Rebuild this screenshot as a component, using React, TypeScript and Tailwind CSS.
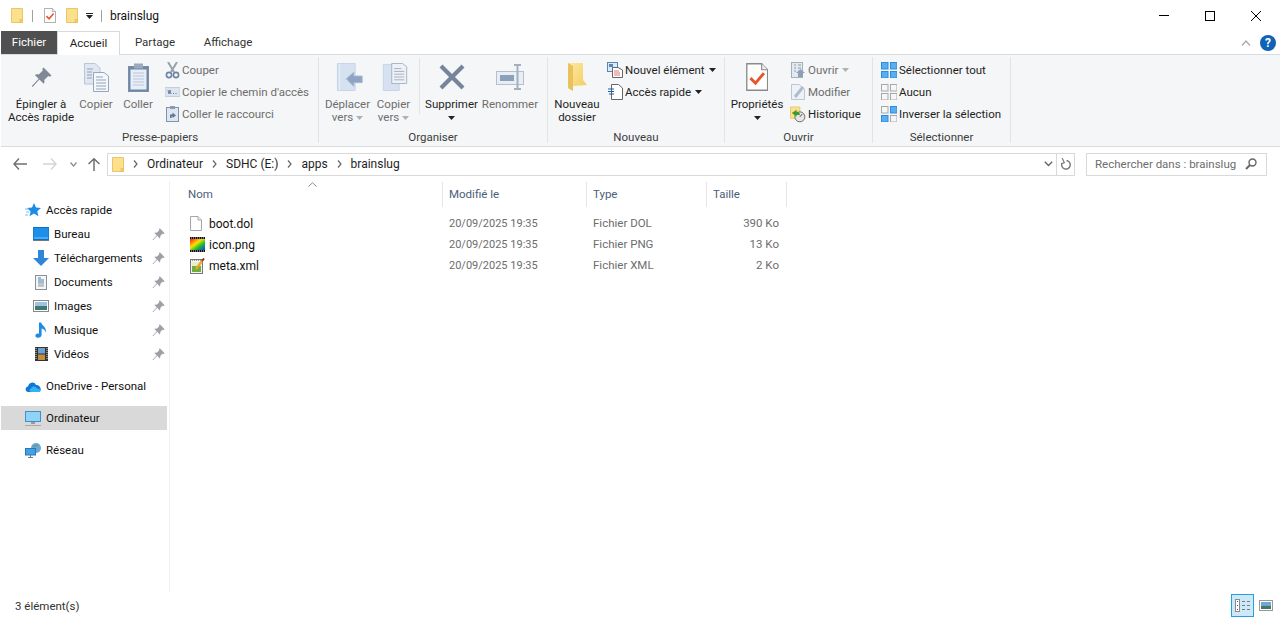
import { type ReactNode } from "react";

const Folder = ({ w = 12, h = 15 }: { w?: number; h?: number }) => (
  <svg width={w} height={h} viewBox="0 0 12 15">
    <path d="M0.5 0.5H11.5V14.5H0.5Z" fill="#fde08c" stroke="#e8c76c" />
    <path d="M9 11.5H11.5V14.5H9Z" fill="#f5cd63" stroke="#e2bb55" strokeWidth="0.6" />
  </svg>
);

const PropsIcon = ({ size = 15 }: { size?: number }) => (
  <svg width={size * 0.8} height={size} viewBox="0 0 20 25">
    <path d="M0.7 0.7H14L19.3 6V24.3H0.7Z" fill="#fff" stroke="#8a8a8a" strokeWidth="1.2" />
    <path d="M14 0.7V6H19.3" fill="#eee" stroke="#8a8a8a" strokeWidth="1" />
    <path d="M4 13.5L8.5 18L16 9" fill="none" stroke="#e8562a" strokeWidth="2.6" />
  </svg>
);

const Caret = ({ color = "#222" }: { color?: string }) => (
  <svg width="7" height="4" viewBox="0 0 7 4" className="inline-block">
    <path d="M0 0H7L3.5 4Z" fill={color} />
  </svg>
);

const Pin = ({ size = 12, color = "#8f979e" }: { size?: number; color?: string }) => (
  <svg width={size} height={size} viewBox="0 0 20 20">
    <path
      d="M12 0.5L19.5 8L18 9.2L16.5 8.6L12.6 12.4C13.2 14 12.8 15 12 16L8 12L1.5 19L0.8 18.2L7.3 11.2L3.6 7.6C4.8 6.8 6 6.6 7.4 7.2L11.2 3.3L10.7 1.8Z"
      fill={color}
    />
  </svg>
);

const CopyIcon = () => (
  <svg width="25" height="29" viewBox="0 0 25 29">
    <path d="M0.5 0.5H11L16 5V21H0.5Z" fill="#dfe7f2" stroke="#b9c6d8" />
    <path d="M9.5 9.5H20L24.5 13V28.5H9.5Z" fill="#f4f7fb" stroke="#97a6ba" />
    <path d="M12 14H19M12 17H22M12 20H22M12 23H22M12 26H22M3 6H9M3 9H8M3 12H8M3 15H8" stroke="#93a3b8" />
  </svg>
);

const PasteIcon = () => (
  <svg width="21" height="29" viewBox="0 0 21 29">
    <rect x="0.5" y="3.5" width="20" height="25" fill="#6f86a6" stroke="#7890ae" />
    <rect x="2.5" y="6.5" width="16" height="20" fill="#e9eef6" />
    <path d="M5 10H16M5 13H16M5 16H16M5 19H16M5 22H16" stroke="#b8c6dc" />
    <rect x="6" y="0.5" width="9" height="5" fill="#9aa9bd" />
  </svg>
);

const CutIcon = () => (
  <svg width="15" height="17" viewBox="0 0 15 17">
    <path d="M3 0L9 10M12 0L6 10" stroke="#97a2af" strokeWidth="2" />
    <circle cx="4" cy="13" r="2.6" fill="none" stroke="#6e84a3" strokeWidth="1.6" />
    <circle cx="11" cy="13" r="2.6" fill="none" stroke="#6e84a3" strokeWidth="1.6" />
  </svg>
);

const PathIcon = () => (
  <svg width="15" height="10" viewBox="0 0 15 10">
    <rect width="15" height="9" y="0.5" fill="#dce4ef" stroke="#c5cfdc" />
    <path d="M3 3L4 7L5 3L6 7M8 6.5H9M10.5 6.5H11.5" stroke="#6b7f99" fill="none" />
  </svg>
);

const ShortcutIcon = () => (
  <svg width="13" height="16" viewBox="0 0 13 16">
    <rect x="0.5" y="1.5" width="12" height="14" fill="#dfe6f0" stroke="#7e93ad" />
    <rect x="4" y="0" width="5" height="3" fill="#8b9bb0" />
    <path d="M4 12V8.5H6.5V6.5L10 9.5L6.5 12V10.5H5.5V12Z" fill="#5f7590" />
  </svg>
);

const MoveIcon = () => (
  <svg width="28" height="28" viewBox="0 0 28 30">
    <path d="M0.5 0.5H19.5V29.5H0.5Z" fill="#d6e2f1" stroke="#c5d3e5" />
    <path d="M3 1V29" stroke="#e8eff8" />
    <path d="M10 17L18 10V14H27V21H18V25Z" fill="#8ea4c2" stroke="#a4b6cf" />
  </svg>
);

const CopyToIcon = () => (
  <svg width="26" height="28" viewBox="0 0 26 30">
    <path d="M0.5 1.5H17.5V29.5H0.5Z" fill="#d6e2f1" stroke="#c5d3e5" />
    <path d="M9.5 0.5H21L25.5 4V22H9.5Z" fill="#eef2f8" stroke="#a3b0c2" />
    <path d="M12 6H20M12 9H23M12 12H23M12 15H23M12 18H23" stroke="#a0adbf" />
  </svg>
);

const DeleteIcon = () => (
  <svg width="26" height="26" viewBox="0 0 26 26">
    <path d="M2 2L24 24M24 2L2 24" stroke="#76859c" strokeWidth="4.2" />
  </svg>
);

const RenameIcon = () => (
  <svg width="28" height="26" viewBox="0 0 28 26">
    <rect x="0.5" y="7.5" width="27" height="13" fill="#e9eef5" stroke="#b4c0cf" />
    <rect x="4" y="11" width="14" height="6" fill="#8ba0bb" />
    <path d="M18 1H25M21.5 1V25M18 25H25" stroke="#a3b0c0" strokeWidth="2" />
  </svg>
);

const NewFolderIcon = () => (
  <svg width="19" height="28" viewBox="0 0 19 28">
    <defs>
      <linearGradient id="nf" x1="0" y1="0" x2="1" y2="1">
        <stop offset="0" stopColor="#fdeaa4" />
        <stop offset="1" stopColor="#f3c95d" />
      </linearGradient>
    </defs>
    <path d="M0 0H15V17L19 22L5 23V28L0 25Z" fill="url(#nf)" />
    <path d="M0 0L5 3V28L0 25Z" fill="#e9c25c" />
  </svg>
);

const NewItemIcon = () => (
  <svg width="16" height="16" viewBox="0 0 16 16">
    <rect x="0.5" y="0.5" width="10" height="9" fill="#dbe9f8" stroke="#5a86b5" />
    <rect x="2" y="2" width="4" height="3" fill="#5a86b5" />
    <path d="M5.5 5.5H11L15.5 8V15.5H5.5Z" fill="#fff" stroke="#666" />
    <path d="M7 9H12M7 11H13M7 13H13" stroke="#d77" />
  </svg>
);

const QuickIcon = () => (
  <svg width="15" height="16" viewBox="0 0 15 16">
    <path d="M3.5 0.5H10.5L14.5 4V15.5H3.5Z" fill="#fff" stroke="#666" />
    <path d="M0 5H6M0 7.5H6M1 10H6" stroke="#1f5fa8" />
  </svg>
);

const OpenIcon = () => (
  <svg width="15" height="16" viewBox="0 0 15 16">
    <rect x="0.5" y="0.5" width="11" height="15" fill="#e3e9f1" stroke="#a4afbe" />
    <path d="M3 3H5M7 3H10M3 6H5M7 6H10M3 9H5" stroke="#8e9cae" />
    <path d="M7 15V11H5L9.5 7L14 11H12V15Z" fill="#8ea0b6" />
  </svg>
);

const EditIcon = () => (
  <svg width="14" height="16" viewBox="0 0 14 16">
    <path d="M0.5 0.5H8L13.5 5V15.5H0.5Z" fill="#eef2f7" stroke="#bcc7d5" />
    <path d="M4 13L12 3" stroke="#aebccd" strokeWidth="3" />
  </svg>
);

const HistoryIcon = () => (
  <svg width="17" height="17" viewBox="0 0 17 17">
    <path d="M0.5 0.5H10.5V12.5H0.5Z" fill="#fde08c" stroke="#e8c76c" />
    <circle cx="10.5" cy="11" r="5.3" fill="#e6e6e6" stroke="#666" />
    <path d="M10.5 11L13 8" stroke="#444" />
    <path d="M2 7L7 3.5V5.5C9.5 5.5 10.5 6.5 10.5 9H7V11Z" fill="#3c9a2e" />
  </svg>
);

const SelectIcon = ({ on }: { on: number[] }) => (
  <svg width="16" height="16" viewBox="0 0 16 16">
    {[
      [0, 0],
      [9, 0],
      [0, 9],
      [9, 9],
    ].map(([x, y], i) => (
      <rect
        key={i}
        x={x + 0.5}
        y={y + 0.5}
        width="6.5"
        height="6.5"
        fill={on.includes(i) ? "#5aaef0" : "#f5f6f7"}
        stroke={on.includes(i) ? "#2a8de0" : "#a8a8a8"}
      />
    ))}
  </svg>
);

const QuickStar = () => (
  <svg width="16" height="14" viewBox="0 0 16 14">
    <path d="M9 0L11 4.6L16 5L12.2 8.2L13.5 13.2L9 10.6L4.5 13.2L5.6 8.4L2 5L7 4.6Z" fill="#1e8be6" />
    <path d="M0 6H4M1 9H4M0 12H3" stroke="#7cc0f2" />
  </svg>
);

const Desktop = () => (
  <svg width="16" height="14" viewBox="0 0 16 14">
    <rect x="0" y="0.5" width="16" height="12" fill="#1d8fe8" stroke="#0f6fc0" />
    <path d="M1 11H15" stroke="#7cc4f6" />
    <path d="M0 13.5H16" stroke="#777" />
  </svg>
);

const Downloads = () => (
  <svg width="16" height="17" viewBox="0 0 16 17">
    <path d="M5 0H11V8H16L8 16L0 8H5Z" fill="#2f86d8" />
  </svg>
);

const Docs = () => (
  <svg width="12" height="15" viewBox="0 0 12 15">
    <rect x="0.5" y="0.5" width="11" height="14" fill="#f4f6f8" stroke="#8b8f94" />
    <path d="M3 3H6M3 5H9M3 7H9" stroke="#4a7eb0" />
    <path d="M3 9H9M3 11H9" stroke="#8d959e" />
  </svg>
);

const Pictures = () => (
  <svg width="16" height="12" viewBox="0 0 16 12">
    <rect x="0.5" y="0.5" width="15" height="11" fill="#fff" stroke="#888" />
    <rect x="2" y="2" width="12" height="4" fill="#9ec4e4" />
    <rect x="2" y="6" width="12" height="4" fill="#3f7a6c" />
  </svg>
);

const Music = () => (
  <svg width="12" height="16" viewBox="0 0 12 16">
    <path d="M4 0.5H6.2C6.6 3.5 11.6 5 11 10.5C10.2 8 8.5 7 6.6 6.5V13C6.6 15 4 16.4 1.8 15.6C-0.2 14.8 0 12.4 2 11.8C2.8 11.5 3.5 11.6 4 11.8Z" fill="#1e8be6" />
  </svg>
);

const Videos = () => (
  <svg width="13" height="14" viewBox="0 0 13 14">
    <rect width="13" height="14" fill="#333" />
    <rect x="3" y="1" width="7" height="5.5" fill="#6da2cf" />
    <rect x="3" y="7.5" width="7" height="5.5" fill="#c08f3e" />
    <path d="M1 1V13M12 1V13" stroke="#ddd" strokeDasharray="1 1" />
  </svg>
);

const Cloud = () => (
  <svg width="16" height="11" viewBox="0 0 16 11">
    <path d="M3.5 11C0 11 -0.5 6 3 5.5C4 1 9.5 0 11 4C14 3.5 16.5 7 15.5 9.5C15 10.5 14.5 11 13.5 11Z" fill="#0f78d4" />
    <path d="M6.5 11C4 11 4 8 6 7.5C7.5 4.5 11 5 12 7.5C14.5 7.5 16 9.5 15.5 10C15 11 14.5 11 13.5 11Z" fill="#35b1f5" />
  </svg>
);

const Computer = () => (
  <svg width="16" height="15" viewBox="0 0 16 15">
    <rect x="0.5" y="0.5" width="15" height="10" fill="#8fd3f7" stroke="#3f8fc8" />
    <path d="M6 12H10" stroke="#999" strokeWidth="2" />
    <path d="M0 14.5H16" stroke="#a9a9a9" />
  </svg>
);

const Network = () => (
  <svg width="16" height="15" viewBox="0 0 16 15">
    <circle cx="11" cy="5" r="5" fill="#6ba6d8" />
    <path d="M8 3C10 4 11 2 13 2" stroke="#5f9950" fill="none" />
    <rect x="0.5" y="5.5" width="10" height="6.5" fill="#3ea2e6" stroke="#2a78b8" />
    <path d="M3 14.5H8M5.5 12V14" stroke="#6c7a86" />
  </svg>
);

const BlankFile = () => (
  <svg width="12" height="15" viewBox="0 0 12 15">
    <path d="M0.5 0.5H8L11.5 4V14.5H0.5Z" fill="#fff" stroke="#a6a6a6" />
    <path d="M8 0.5V4H11.5" fill="#f0f0f0" stroke="#a6a6a6" />
  </svg>
);

const ImageFile = () => (
  <svg width="15" height="15" viewBox="0 0 15 15">
    <defs>
      <linearGradient id="rb" x1="0" y1="0" x2="1" y2="1">
        <stop offset="0" stopColor="#ff1a10" />
        <stop offset="0.4" stopColor="#ffe000" />
        <stop offset="0.65" stopColor="#20c030" />
        <stop offset="1" stopColor="#1040e0" />
      </linearGradient>
    </defs>
    <rect width="15" height="15" fill="#111" />
    <rect y="2" width="15" height="11" fill="url(#rb)" />
    <path d="M1 1H14M1 14H14" stroke="#ccc" strokeDasharray="1 1" />
  </svg>
);

const XmlFile = () => (
  <svg width="15" height="16" viewBox="0 0 15 16">
    <rect x="0.5" y="1.5" width="12" height="14" fill="#f3f3f3" stroke="#777" />
    <path d="M2 2.5H11" stroke="#999" strokeDasharray="1 1" />
    <rect x="2" y="8" width="9" height="6" fill="#6fae3f" />
    <rect x="2" y="4" width="9" height="4" fill="#e7eec8" />
    <path d="M6 11L12 3" stroke="#e9a826" strokeWidth="2.4" />
    <path d="M12 3L14 0.5" stroke="#8e2d22" strokeWidth="2" />
  </svg>
);

const BigBtn = ({
  w,
  icon,
  children,
  off,
}: {
  w: string;
  icon: ReactNode;
  children: ReactNode;
  off?: boolean;
}) => (
  <div className={`${w} flex flex-col items-center shrink-0 ${off ? "text-[#6d6d6d]" : "text-[#1e1e1e]"}`}>
    <div className="h-[43px] flex items-center justify-center pt-[1px]">{icon}</div>
    <div className="text-center leading-[13px] whitespace-nowrap">{children}</div>
  </div>
);

const SmallBtn = ({ icon, label, off, caret }: { icon: ReactNode; label: string; off?: boolean; caret?: string }) => (
  <div className={`h-[22px] flex items-center whitespace-nowrap ${off ? "text-[#6d6d6d]" : "text-[#1e1e1e]"}`}>
    <span className="w-[16px] mr-[2px] flex items-center justify-center">{icon}</span>
    <span className="pt-px">{label}</span>
    {caret && (
      <span className="ml-[4px] flex">
        <Caret color={caret} />
      </span>
    )}
  </div>
);

const Group = ({ w, label, children }: { w: string; label: string; children: ReactNode }) => (
  <div className={`${w} relative flex flex-col shrink-0`}>
    <div className="flex h-[73px]">{children}</div>
    <div className="h-[18px] text-center leading-[18px] text-[#3c3c3c] pr-[1px]">{label}</div>
    <div className="absolute right-0 top-[2px] bottom-[3px] w-px bg-[#e2e3e4]" />
  </div>
);

const NavItem = ({
  icon,
  label,
  pinned,
  root,
  active,
}: {
  icon: ReactNode;
  label: string;
  pinned?: boolean;
  root?: boolean;
  active?: boolean;
}) => (
  <div className={`h-[24px] ml-[1px] w-[166px] flex items-center text-[#111] ${active ? "bg-[#d9d9d9]" : ""} ${root ? "pl-[24px]" : "pl-[32px]"}`}>
    <span className="w-[16px] mr-[5px] flex items-center justify-center">{icon}</span>
    <span className="flex-1 whitespace-nowrap pt-px">{label}</span>
    {pinned && (
      <span className="mr-[2px] flex">
        <Pin size={13} color="#9aa0a6" />
      </span>
    )}
  </div>
);

const files = [
  { icon: <BlankFile />, name: "boot.dol", type: "Fichier DOL", size: "390 Ko" },
  { icon: <ImageFile />, name: "icon.png", type: "Fichier PNG", size: "13 Ko" },
  { icon: <XmlFile />, name: "meta.xml", type: "Fichier XML", size: "2 Ko" },
];

const Crumb = () => (
  <svg width="5" height="8" viewBox="0 0 5 8" className="mx-[9px] shrink-0">
    <path d="M1 0.5L4 4L1 7.5" fill="none" stroke="#666" strokeWidth="1.2" />
  </svg>
);

export default function App() {
  return (
    <div className="w-[1280px] h-[618px] overflow-hidden bg-white flex flex-col text-[11.5px] font-['Roboto','Liberation_Sans',sans-serif] text-[#1e1e1e]">
      {/* title bar */}
      <div className="h-[31px] flex items-center pl-[11px] shrink-0">
        <Folder />
        <span className="w-px h-[12px] bg-[#a0a0a0] ml-[9px] mr-[11px]" />
        <PropsIcon size={15} />
        <span className="ml-[10px]">
          <Folder />
        </span>
        <span className="ml-[8px] flex flex-col items-center gap-[1px]">
          <span className="w-[7px] h-px bg-[#222]" />
          <Caret />
        </span>
        <span className="w-px h-[12px] bg-[#a0a0a0] ml-[8px] mr-[8px]" />
        <span className="text-[#111] text-[12px]">brainslug</span>
        <div className="ml-auto flex h-full pr-[1px]">
          <div className="w-[46px] flex items-center justify-center">
            <span className="w-[10px] h-px bg-black" />
          </div>
          <div className="w-[46px] flex items-center justify-center">
            <span className="w-[10px] h-[10px] border border-black" />
          </div>
          <div className="w-[46px] flex items-center justify-center">
            <svg width="10" height="10" viewBox="0 0 10 10">
              <path d="M0 0L10 10M10 0L0 10" stroke="#000" strokeWidth="1" />
            </svg>
          </div>
        </div>
      </div>

      {/* tabs */}
      <div className="h-[23px] flex items-stretch pl-[1px] shrink-0 relative">
        <div className="w-[56px] bg-[#505050] text-white flex items-center justify-center pt-px">Fichier</div>
        <div className="w-[63px] h-[24px] bg-white border border-b-0 border-[#d9d9d9] flex items-center justify-center relative z-10">Accueil</div>
        <div className="w-[70px] flex items-center justify-center text-[#333] pt-px">Partage</div>
        <div className="w-[76px] flex items-center justify-center text-[#333] pt-px">Affichage</div>
        <div className="ml-auto flex items-center pr-[4px]">
          <svg width="10" height="6" viewBox="0 0 10 6" className="mr-[9px]">
            <path d="M1 5.5L5 1L9 5.5" fill="none" stroke="#a8a8a8" strokeWidth="1.2" />
          </svg>
          <span className="w-[16px] h-[16px] rounded-full bg-[#0f62b5] text-white text-[12px] font-bold flex items-center justify-center">?</span>
        </div>
      </div>

      {/* ribbon */}
      <div className="h-[93px] ml-[1px] bg-[#f5f6f7] border-y border-[#dadbdc] flex pl-[1px] shrink-0">
        <Group w="w-[317px]" label="Presse-papiers">
          <BigBtn w="w-[78px]" icon={<Pin size={21} color="#7f8a94" />}>
            Épingler à
            <br />
            Accès rapide
          </BigBtn>
          <BigBtn w="w-[32px]" off icon={<CopyIcon />}>
            Copier
          </BigBtn>
          <BigBtn w="w-[52px]" off icon={<PasteIcon />}>
            Coller
          </BigBtn>
          <div className="pt-[4px]">
            <SmallBtn off icon={<CutIcon />} label="Couper" />
            <SmallBtn off icon={<PathIcon />} label="Copier le chemin d'accès" />
            <SmallBtn off icon={<ShortcutIcon />} label="Coller le raccourci" />
          </div>
        </Group>
        <Group w="w-[229px]" label="Organiser">
          <div className="w-[4px]" />
          <BigBtn w="w-[49px]" off icon={<span className="flex ml-[5px]"><MoveIcon /></span>}>
            Déplacer
            <br />
            vers <Caret color="#b0b0b0" />
          </BigBtn>
          <BigBtn w="w-[43px]" off icon={<span className="flex ml-[2px]"><CopyToIcon /></span>}>
            Copier
            <br />
            vers <Caret color="#b0b0b0" />
          </BigBtn>
          <div className="w-px h-[56px] bg-[#e2e3e4] ml-[4px] mr-[3px] mt-[3px]" />
          <BigBtn w="w-[57px]" icon={<DeleteIcon />}>
            Supprimer
            <br />
            <Caret />
          </BigBtn>
          <BigBtn w="w-[60px]" off icon={<RenameIcon />}>
            Renommer
          </BigBtn>
        </Group>
        <Group w="w-[177px]" label="Nouveau">
          <div className="w-[4px]" />
          <BigBtn w="w-[50px]" icon={<NewFolderIcon />}>
            Nouveau
            <br />
            dossier
          </BigBtn>
          <div className="pt-[4px] ml-[5px]">
            <SmallBtn icon={<NewItemIcon />} label="Nouvel élément" caret="#222" />
            <SmallBtn icon={<QuickIcon />} label="Accès rapide" caret="#222" />
          </div>
        </Group>
        <Group w="w-[148px]" label="Ouvrir">
          <div className="w-[4px]" />
          <BigBtn w="w-[56px]" icon={<PropsIcon size={28} />}>
            Propriétés
            <br />
            <Caret />
          </BigBtn>
          <div className="pt-[4px] ml-[5px]">
            <SmallBtn off icon={<OpenIcon />} label="Ouvrir" caret="#b0b0b0" />
            <SmallBtn off icon={<EditIcon />} label="Modifier" />
            <SmallBtn icon={<HistoryIcon />} label="Historique" />
          </div>
        </Group>
        <Group w="w-[138px]" label="Sélectionner">
          <div className="pt-[4px] ml-[8px]">
            <SmallBtn icon={<SelectIcon on={[0, 1, 2, 3]} />} label="Sélectionner tout" />
            <SmallBtn icon={<SelectIcon on={[]} />} label="Aucun" />
            <SmallBtn icon={<SelectIcon on={[1, 2]} />} label="Inverser la sélection" />
          </div>
        </Group>
      </div>

      {/* address row */}
      <div className="h-[34px] flex items-center pl-[13px] shrink-0">
        <svg width="14" height="12" viewBox="0 0 14 12">
          <path d="M6 0.5L1 6L6 11.5M1 6H14" fill="none" stroke="#6f6f6f" strokeWidth="1.4" />
        </svg>
        <svg width="14" height="12" viewBox="0 0 14 12" className="ml-[16px]">
          <path d="M8 0.5L13 6L8 11.5M13 6H0" fill="none" stroke="#d4d4d4" strokeWidth="1.4" />
        </svg>
        <svg width="7" height="5" viewBox="0 0 7 5" className="ml-[13px]">
          <path d="M0.5 0.5L3.5 4L6.5 0.5" fill="none" stroke="#8a8a8a" strokeWidth="1.2" />
        </svg>
        <svg width="12" height="13" viewBox="0 0 12 13" className="ml-[11px]">
          <path d="M0.5 6L6 0.8L11.5 6M6 1V13" fill="none" stroke="#6f6f6f" strokeWidth="1.5" />
        </svg>
        <div className="w-[968px] h-[23px] ml-[7px] border border-[#d9d9d9] flex items-center pl-[4px] text-[12px]">
          <Folder />
          <Crumb />
          <span>Ordinateur</span>
          <Crumb />
          <span>SDHC (E:)</span>
          <Crumb />
          <span>apps</span>
          <Crumb />
          <span>brainslug</span>
          <svg width="9" height="6" viewBox="0 0 9 6" className="ml-auto mr-[3px]">
            <path d="M0.8 0.8L4.5 4.5L8.2 0.8" fill="none" stroke="#666" strokeWidth="1.4" />
          </svg>
          <span className="w-px h-full bg-[#d9d9d9]" />
          <span className="w-[17px] flex justify-center">
            <svg width="11" height="12" viewBox="0 0 11 12">
              <path d="M6.5 2.5A4.3 4.3 0 1 1 2 5" fill="none" stroke="#7a7a7a" strokeWidth="1.4" />
              <path d="M3.5 0V5H0" transform="rotate(-25 3 3)" fill="none" stroke="#7a7a7a" strokeWidth="1.2" />
            </svg>
          </span>
        </div>
        <div className="w-[181px] h-[23px] ml-[11px] border border-[#d9d9d9] flex items-center pl-[8px] text-[#6d6d6d]">
          <span className="whitespace-nowrap pt-px">Rechercher dans : brainslug</span>
          <svg width="12" height="12" viewBox="0 0 12 12" className="ml-auto mr-[9px]">
            <circle cx="7.5" cy="4.5" r="3.5" fill="none" stroke="#666" strokeWidth="1.4" />
            <path d="M5 7L1 11" stroke="#666" strokeWidth="2" />
          </svg>
        </div>
      </div>

      {/* main */}
      <div className="flex-1 flex min-h-0">
        <div className="w-[170px] border-r border-[#f0f0f0] pt-[17px] shrink-0">
          <NavItem root icon={<QuickStar />} label="Accès rapide" />
          <NavItem pinned icon={<Desktop />} label="Bureau" />
          <NavItem pinned icon={<Downloads />} label="Téléchargements" />
          <NavItem pinned icon={<Docs />} label="Documents" />
          <NavItem pinned icon={<Pictures />} label="Images" />
          <NavItem pinned icon={<Music />} label="Musique" />
          <NavItem pinned icon={<Videos />} label="Vidéos" />
          <div className="h-[8px]" />
          <NavItem root icon={<Cloud />} label="OneDrive - Personal" />
          <div className="h-[8px]" />
          <NavItem root active icon={<Computer />} label="Ordinateur" />
          <div className="h-[8px]" />
          <NavItem root icon={<Network />} label="Réseau" />
        </div>

        <div className="flex-1 pl-[11px] pt-px relative">
          <svg width="9" height="5" viewBox="0 0 9 5" className="absolute left-[138px] top-[1px]">
            <path d="M0.5 4.5L4.5 0.8L8.5 4.5" fill="none" stroke="#8a8a8a" />
          </svg>
          <div className="grid grid-cols-[262px_144px_120px_80px] h-[25px] text-[#4c607a] mb-[6px]">
            <div className="pl-[7px] pt-px flex items-center border-r border-[#e5e5e5]">Nom</div>
            <div className="pl-[6px] pt-px flex items-center border-r border-[#e5e5e5]">Modifié le</div>
            <div className="pl-[6px] pt-px flex items-center border-r border-[#e5e5e5]">Type</div>
            <div className="pl-[6px] pt-px flex items-center border-r border-[#e5e5e5]">Taille</div>
          </div>
          {files.map((f) => (
            <div key={f.name} className="grid grid-cols-[262px_144px_120px_80px] h-[21px] items-center text-[#6d6d6d]">
              <div className="pl-[9px] flex items-center text-[#111] text-[12px]">
                <span className="w-[15px] mr-[4px] flex">{f.icon}</span>
                {f.name}
              </div>
              <div className="pl-[6px] pt-px text-[11px]">20/09/2025 19:35</div>
              <div className="pl-[6px] pt-px">{f.type}</div>
              <div className="pr-[8px] pt-px text-right">{f.size}</div>
            </div>
          ))}
        </div>
      </div>

      {/* status bar */}
      <div className="h-[26px] flex items-end pb-[1px] pl-[15px] pr-[3px] shrink-0 text-[#333]">
        <span className="mb-[2px]">3 élément(s)</span>
        <div className="ml-auto flex items-center gap-[1px]">
          <div className="w-[23px] h-[23px] bg-[#cce8f9] border-[1px] border-[#26a0da] flex items-center justify-center">
            <svg width="16" height="13" viewBox="0 0 16 13">
              <rect x="0.5" y="0.5" width="4" height="12" fill="#fff" stroke="#8a8a8a" />
              <path d="M7 2.5H10M12 2.5H15M7 6.5H10M12 6.5H15M7 10.5H10M12 10.5H15" stroke="#7a7a7a" />
              <path d="M2 2.5H3M2 6.5H3" stroke="#555" />
              <path d="M2 10.5H3" stroke="#b03030" />
            </svg>
          </div>
          <div className="w-[22px] h-[23px] flex items-center justify-center">
            <svg width="14" height="11" viewBox="0 0 14 11">
              <rect x="0.5" y="0.5" width="13" height="10" fill="#fff" stroke="#999" />
              <rect x="2" y="2" width="10" height="3.5" fill="#6da8e0" />
              <rect x="2" y="5.5" width="10" height="3.5" fill="#3f7a6c" />
            </svg>
          </div>
        </div>
      </div>
    </div>
  );
}
